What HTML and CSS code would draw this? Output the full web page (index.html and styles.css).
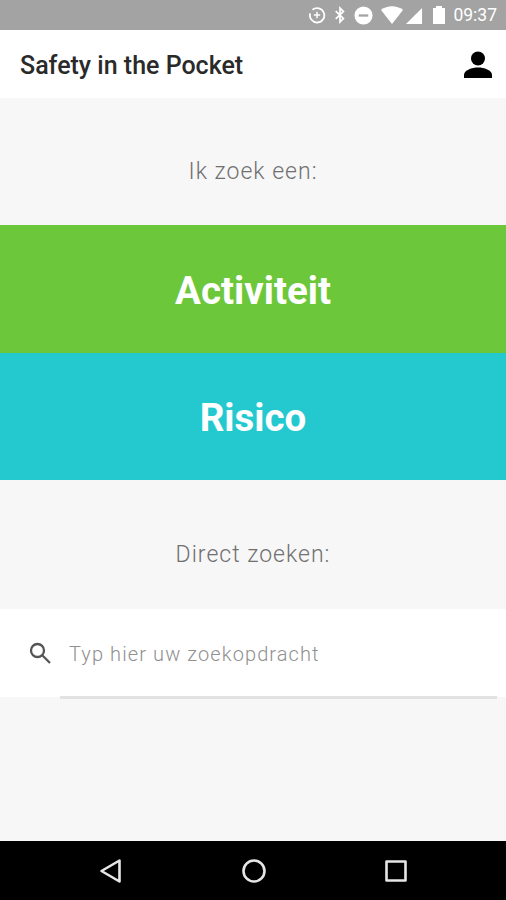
FILE: index.html
```html
<!doctype html>
<html lang="nl">
<head>
  <meta charset="utf-8">
  <title>Safety in the Pocket</title>
  <meta name="viewport" content="width=device-width, initial-scale=1">
  <link rel="stylesheet" href="styles.css">
</head>
<body>
  <div class="app">
    <div class="status-bar">
      <svg class="status-icon" width="18" height="18" viewBox="0 0 20 20" fill="none" stroke="#fff" stroke-width="2">
        <path d="M5 4.200a8 8 0 1 1-2.600 4"/>
        <path d="M6.500 10h7M10 6.500v7" stroke-width="1.600"/>
      </svg>
      <svg class="status-icon" width="12" height="18" viewBox="0 0 14 20" fill="none" stroke="#fff" stroke-width="2">
        <path d="M2 5.500l9 8.500-4 4V2l4 4-9 8.500"/>
      </svg>
      <svg class="status-icon" width="19" height="19" viewBox="0 0 20 20">
        <circle cx="10" cy="10" r="9.500" fill="#fff"/>
        <rect x="5" y="8.800" width="10" height="2.400" fill="#a3a3a3"/>
      </svg>
      <svg class="status-icon" width="22" height="18" viewBox="0 0 22 18">
        <path d="M0 4C6-1 16-1 22 4L11 18z" fill="#fff"/>
      </svg>
      <svg class="status-icon status-signal" width="17" height="17" viewBox="0 0 18 18">
        <path d="M0 18L17 1v17z" fill="#fff"/>
      </svg>
      <svg class="status-icon status-battery" width="12" height="18" viewBox="0 0 12 18">
        <path d="M0 2h3V0h6v2h3v16H0z" fill="#fff"/>
      </svg>
      <span class="status-time">09:37</span>
    </div>

    <header class="app-header">
      <h1 class="app-title">Safety in the Pocket</h1>
      <svg class="user-icon" width="30" height="30" viewBox="0 0 30 30">
        <circle cx="15" cy="8.500" r="7"/>
        <path d="M1 28v-3c0-5 8-7.500 14-7.500S29 20 29 25v3z"/>
      </svg>
    </header>

    <main class="content">
      <div class="section-label section-label-first">Ik zoek een:</div>
      <a class="choice choice-green">Activiteit</a>
      <a class="choice choice-teal">Risico</a>
      <div class="section-label section-label-second">Direct zoeken:</div>
      <div class="search-row">
        <svg class="search-icon" width="24" height="24" viewBox="0 0 24 24" fill="none" stroke="#555" stroke-width="2.300">
          <circle cx="9.500" cy="9.500" r="6.500"/>
          <path d="M14.500 14.500l7.500 7.500"/>
        </svg>
        <div class="search-field">Typ hier uw zoekopdracht</div>
      </div>
    </main>

    <nav class="nav-bar">
      <svg width="24" height="26" viewBox="0 0 24 26" fill="none" stroke="#e6e6e6" stroke-width="2.600" stroke-linejoin="round">
        <path d="M20.500 2.500v21L2.500 13z"/>
      </svg>
      <svg width="26" height="26" viewBox="0 0 26 26" fill="none" stroke="#e6e6e6" stroke-width="2.600">
        <circle cx="13" cy="13" r="10.500"/>
      </svg>
      <svg width="22" height="22" viewBox="0 0 22 22" fill="none" stroke="#e6e6e6" stroke-width="2.600" stroke-linejoin="round">
        <rect x="1.500" y="1.500" width="19" height="19"/>
      </svg>
    </nav>
  </div>
</body>
</html>
```

FILE: styles.css
```css
* {
  box-sizing: border-box;
}
body {
  margin: 0;
  background: #f7f7f7;
  font-family: 'Roboto', sans-serif;
}
.app {
  display: flex;
  flex-direction: column;
  width: 506px;
  height: 900px;
  overflow: hidden;
}
.status-bar {
  display: flex;
  align-items: center;
  justify-content: flex-end;
  gap: 8px;
  height: 30px;
  padding-right: 9px;
  background: #a3a3a3;
}
.status-signal {
  margin-left: -5px;
}
.status-battery {
  margin-left: 2px;
}
.status-time {
  font-size: 17.500px;
  color: #fff;
}
.app-header {
  display: flex;
  align-items: center;
  justify-content: space-between;
  height: 68px;
  padding: 2px 13px 0 20px;
  background: #fff;
}
.app-title {
  margin: 0;
  font-size: 25px;
  font-weight: 500;
  color: #2a2a2a;
}
.user-icon {
  fill: #000;
}
.content {
  display: flex;
  flex-direction: column;
  flex: 1;
}
.section-label {
  display: flex;
  align-items: center;
  justify-content: center;
  font-size: 23px;
  font-weight: 300;
  letter-spacing: 1px;
  color: #707070;
}
.section-label-first {
  height: 127px;
  padding-top: 20px;
}
.section-label-second {
  height: 129px;
  padding-top: 20px;
}
.choice {
  display: flex;
  align-items: center;
  justify-content: center;
  height: 127.500px;
  padding-top: 3px;
  font-size: 38.500px;
  font-weight: 700;
  color: #fff;
}
.choice-green {
  background: #6cc83a;
}
.choice-teal {
  background: #24c9d0;
}
.search-row {
  display: flex;
  height: 88px;
  padding: 0 9px 0 28px;
  background: #fff;
}
.search-icon {
  flex: none;
  margin-top: 32px;
}
.search-field {
  flex: 1;
  height: 90px;
  margin-left: 8px;
  padding: 33px 0 0 9px;
  border-bottom: 3px solid #e2e2e2;
  font-size: 20px;
  font-weight: 300;
  letter-spacing: 1.100px;
  color: #909090;
}
.nav-bar {
  display: flex;
  align-items: center;
  justify-content: space-between;
  height: 59px;
  padding: 0 99px;
  background: #000;
}
```
